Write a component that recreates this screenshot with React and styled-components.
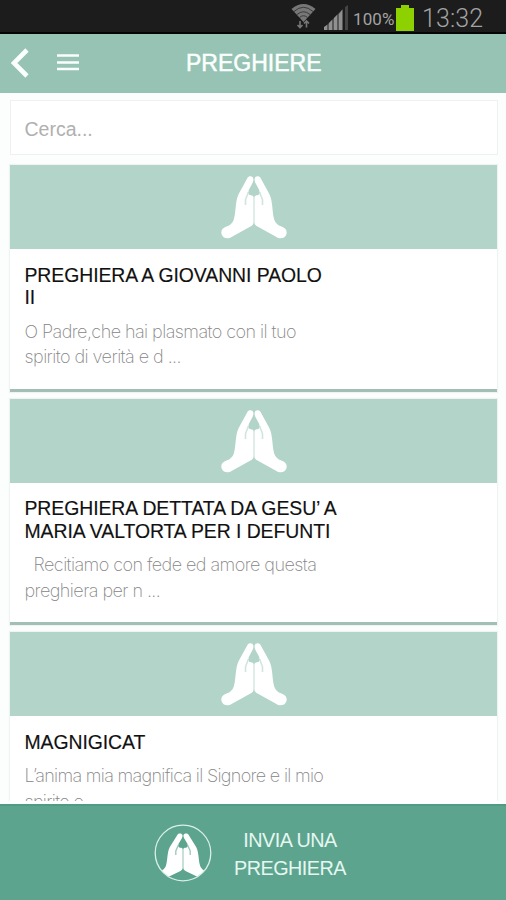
import React from "react";
import styled, { createGlobalStyle } from "styled-components";

const GlobalStyle = createGlobalStyle`
  * {
    box-sizing: border-box;
  }

  body {
    margin: 0;
    background: #fcfdfd;
    font-family: "Liberation Sans", Arial, sans-serif;
  }
`;

const Screen = styled.div`
  display: flex;
  flex-direction: column;
  width: 506px;
  height: 900px;
  overflow: hidden;
  background: #fcfdfd;
`;

const StatusBar = styled.div`
  display: flex;
  align-items: center;
  flex: none;
  height: 34px;
  padding-left: 291px;
  background: #1c1c1c;
  border-bottom: 2px solid #050505;
  color: #a3a3a3;
  font-family: Roboto, sans-serif;

  svg {
    flex: none;
  }
`;

const Percent = styled.span`
  width: 43px;
  margin-left: 4px;
  margin-top: 5px;
  font-size: 17px;
  letter-spacing: 0.1px;
  white-space: nowrap;
`;

const Clock = styled.span`
  margin-left: 8px;
  margin-top: 4px;
  font-size: 25px;
  font-weight: 300;
  letter-spacing: 0.1px;
`;

const Header = styled.header`
  display: grid;
  grid-template-columns: 44px 142px 1fr;
  align-items: center;
  flex: none;
  height: 59px;
  padding-bottom: 2px;
  background: #96c3b4;
  color: #fbfffd;
`;

const IconButton = styled.button`
  display: flex;
  padding: 0 0 0 ${({ $indent }) => $indent}px;
  border: 0;
  background: none;
  color: inherit;
`;

const PageTitle = styled.h1`
  margin: 0;
  font-size: 23px;
  font-weight: 400;
  line-height: 28px;
  -webkit-text-stroke: 0.5px #fbfffd;
`;

const Content = styled.main`
  display: flex;
  flex-direction: column;
  flex: 1;
  min-height: 0;
  overflow: hidden;
  padding: 7px 9px 0 10px;
  border-bottom: 3px solid #fcfffe;
`;

const SearchInput = styled.input`
  flex: none;
  width: 488px;
  height: 55px;
  margin-bottom: 10px;
  padding: 3px 14px 0 13.5px;
  border: 1px solid #eff1f0;
  border-radius: 0;
  background: #fff;
  font-family: "Liberation Sans", Arial, sans-serif;
  font-size: 19.5px;

  &::placeholder {
    color: #b0b0b0;
    opacity: 1;
  }
`;

const CardList = styled.div`
  display: flex;
  flex-direction: column;
  gap: 7px;
`;

const Card = styled.article`
  flex: none;
  height: 226.5px;
  background: #fff;
  border-bottom: 3px solid #a3bfb5;
  box-shadow: 0 0 1px 1px #eff3f1;
`;

const CardBanner = styled.div`
  display: flex;
  justify-content: center;
  height: 84px;
  padding-top: 10px;
  background: #b2d4c9;
`;

const CardBody = styled.div`
  padding: 14.5px 14.5px 0;
`;

const CardTitle = styled.h2`
  margin: 0 0 10px;
  color: #111;
  font-size: 19.4px;
  font-weight: 400;
  letter-spacing: -0.06px;
  line-height: 22.5px;
  white-space: pre-line;
  -webkit-text-stroke: 0.15px #111;
`;

const CardText = styled.p`
  margin: 0;
  color: #868686;
  font-family: Inter, "Liberation Sans", sans-serif;
  font-size: 18px;
  font-weight: 200;
  letter-spacing: ${({ $spacing }) => $spacing || -0.55}px;
  line-height: 25.5px;
  white-space: pre-wrap;
`;

const Footer = styled.footer`
  display: flex;
  align-items: center;
  flex: none;
  height: 96px;
  padding-left: 154px;
  background: #5da48e;
  border-top: 2px solid #519a83;
  color: #e6f7f1;
`;

const FooterLabel = styled.span`
  width: 120px;
  margin-left: 18px;
  margin-top: 2px;
  font-size: 19.8px;
  letter-spacing: -0.5px;
  line-height: 28px;
  text-align: center;
`;

const prayers = [
  {
    title: "PREGHIERA A GIOVANNI PAOLO\nII",
    text: "O Padre,che hai plasmato con il tuo\nspirito di verità e d ...",
  },
  {
    title: "PREGHIERA DETTATA DA GESU’ A\nMARIA VALTORTA PER I DEFUNTI",
    text: "  Recitiamo con fede ed amore questa\npreghiera per n ...",
  },
  {
    title: "MAGNIGICAT",
    text: "L’anima mia magnifica il Signore e il mio\nspirito e",
    spacing: -0.68,
  },
];

// one hand, drawn on the left half of a 66x64 box
function Hand({ crease }) {
  return (
    <>
      <path
        fill="currentColor"
        d="M26.3 3.2C27.6 .6 31.9 .6 32.4 3.8C32.6 6 31.8 7.5 31 9L27.8 15C27.2 17 27.6 19.5 28.6 20C29.5 20.4 32.6 19.8 32.6 22.5V47C32.6 49.5 31.5 50.5 29.5 51.5L11 61.8C6.5 64.8 1.5 63 .5 59C-.4 55 2 52.8 5.5 51.6C9.500 50.3 11.5 48 12.8 44.5C14.5 39 14.3 32 15.5 26C16 22.5 17 20.500 18.2 18Z"
      />
      <path d="M27.2 17C27 20 24.8 22.5 24.5 25V30" fill="none" stroke={crease} strokeWidth="1.6" opacity=".6" />
    </>
  );
}

function PrayingHands({ crease = "#b2d4c9", ...props }) {
  return (
    <svg width="66" height="64" viewBox="0 0 66 64" {...props}>
      <Hand crease={crease} />
      <g transform="translate(66 0) scale(-1 1)">
        <Hand crease={crease} />
      </g>
    </svg>
  );
}

function FooterIcon() {
  return (
    <svg width="58" height="58" viewBox="0 0 58 58" color="#fff">
      <defs>
        <clipPath id="disc">
          <circle cx="29" cy="29" r="27.5" />
        </clipPath>
      </defs>
      <g clipPath="url(#disc)">
        <PrayingHands x="1" y="8.5" width="56" height="48" preserveAspectRatio="none" crease="#5da48e" />
      </g>
      <circle cx="29" cy="29" r="27.8" fill="none" stroke="#d9f0e8" strokeWidth="1.3" />
    </svg>
  );
}

function WifiIcon() {
  return (
    <svg width="25" height="28" viewBox="0 0 25 28">
      <path d="M0.5 7Q12.5 -3 24.5 7L12.5 20Z" fill="#777" />
      <g fill="none" stroke="#333" strokeWidth="0.9">
        <path d="M3 9.5Q12.5 1 22 9.5" />
        <path d="M6 12.5Q12.5 7 19 12.5" />
        <path d="M8.5 15.5Q12.5 12 16.5 15.5" />
      </g>
      <path d="M9 19v6M6.5 23l2.500 2.500 2.500-2.500M15.5 25.5v-6M13 21.5l2.500-2.500 2.500 2.500" fill="none" stroke="#777" strokeWidth="1.6" />
    </svg>
  );
}

const SignalSvg = styled.svg`
  margin: 4px 0 0 7px;
`;

function SignalIcon() {
  return (
    <SignalSvg width="26" height="26" viewBox="0 0 26 26">
      <path d="M1 25V22L4 20V25ZM6 25V18L9 15V25ZM11 25V13L14 10V25ZM16 25V9L19 5V25Z" fill="#999" />
      <path d="M1 25V23L20 4V25Z" fill="#888" opacity=".55" />
      <path d="M22 25V2L25 0V25Z" fill="#444" />
    </SignalSvg>
  );
}

const BatterySvg = styled.svg`
  margin-top: 3px;
`;

function BatteryIcon() {
  return (
    <BatterySvg width="18" height="26" viewBox="0 0 18 26">
      <path d="M5 0h8v3h5v23H0V3h5z" fill="#8ed100" />
    </BatterySvg>
  );
}

function App() {
  return (
    <>
      <GlobalStyle />
      <Screen>
        <StatusBar>
          <WifiIcon />
          <SignalIcon />
          <Percent>100%</Percent>
          <BatteryIcon />
          <Clock>13:32</Clock>
        </StatusBar>

        <Header>
          <IconButton $indent={11} aria-label="Indietro">
            <svg width="19" height="30" viewBox="0 0 19 30">
              <path d="M16 2L3 15L16 28" fill="none" stroke="currentColor" strokeWidth="4.6" />
            </svg>
          </IconButton>
          <IconButton $indent={12} aria-label="Menu">
            <svg width="24" height="18" viewBox="0 0 24 18">
              <path d="M1 1.5H23M1 8.5H23M1 15H23" stroke="currentColor" strokeWidth="2.6" />
            </svg>
          </IconButton>
          <PageTitle>PREGHIERE</PageTitle>
        </Header>

        <Content>
          <SearchInput placeholder="Cerca..." />
          <CardList>
            {prayers.map((prayer) => (
              <Card key={prayer.title}>
                <CardBanner>
                  <PrayingHands color="#fff" />
                </CardBanner>
                <CardBody>
                  <CardTitle>{prayer.title}</CardTitle>
                  <CardText $spacing={prayer.spacing}>{prayer.text}</CardText>
                </CardBody>
              </Card>
            ))}
          </CardList>
        </Content>

        <Footer>
          <FooterIcon />
          <FooterLabel>INVIA UNA PREGHIERA</FooterLabel>
        </Footer>
      </Screen>
    </>
  );
}

export default App;
